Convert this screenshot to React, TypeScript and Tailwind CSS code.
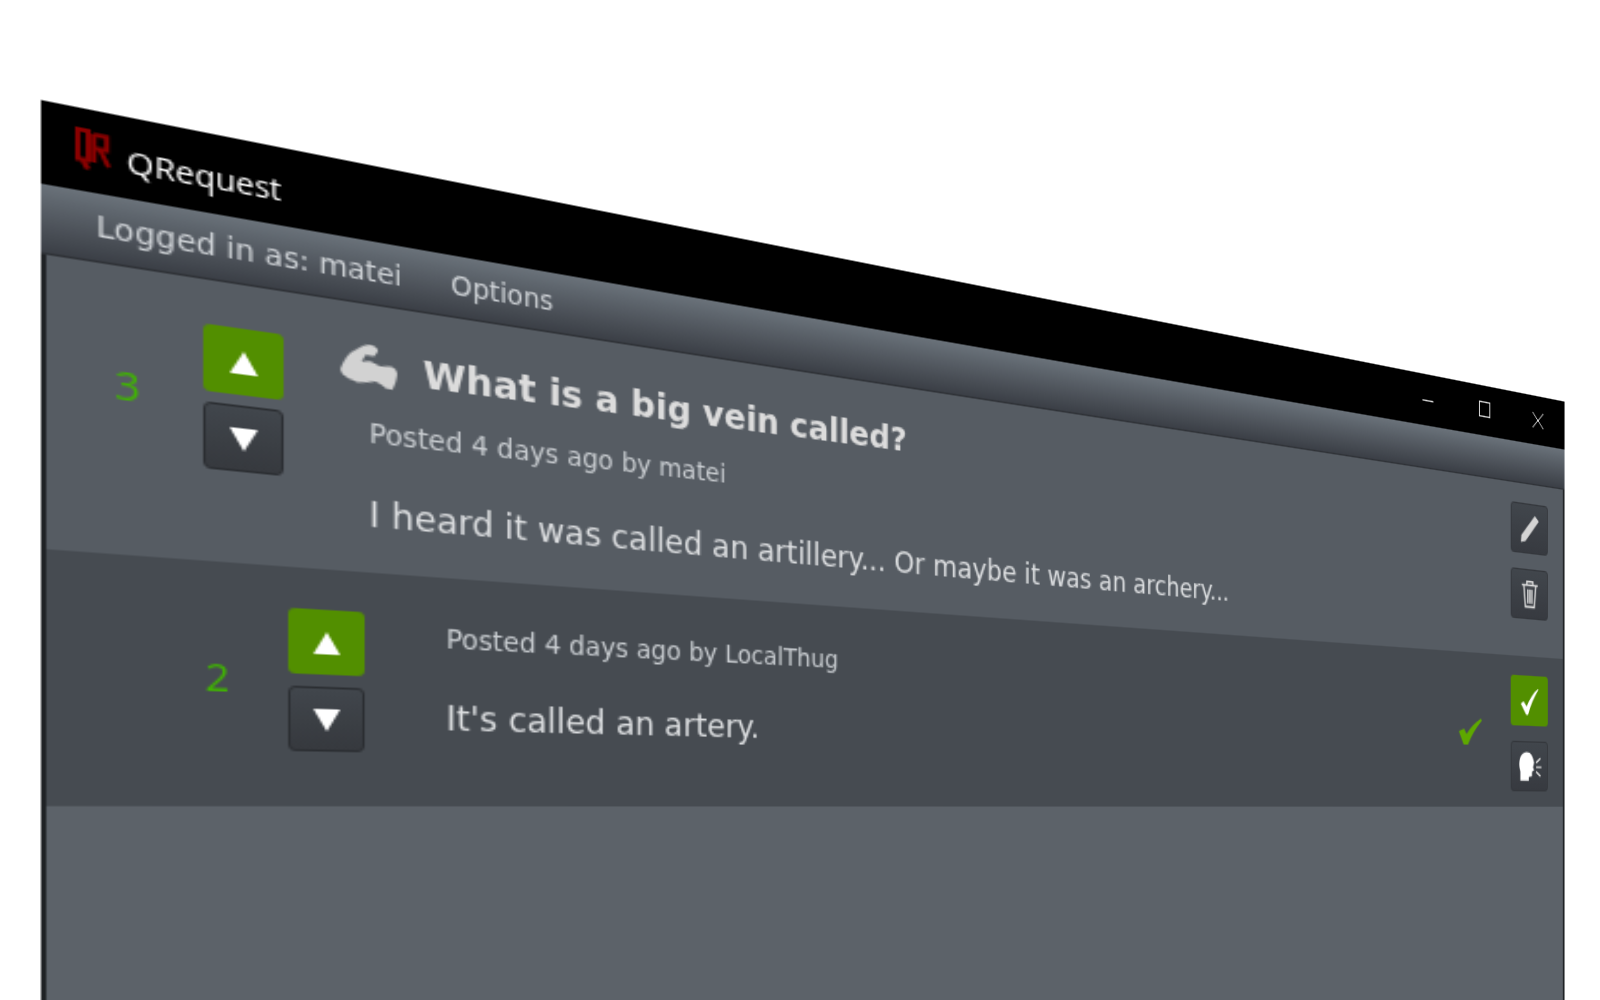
import React from "react";

function UpBtn() {
  return (
    <div className="flex h-[32px] w-[34px] items-center justify-center rounded-[3px] bg-[#528f00]">
      <svg width="12" height="11" viewBox="0 0 12 11"><polygon points="6,0 12,11 0,11" fill="#fff" /></svg>
    </div>
  );
}
function DownBtn() {
  return (
    <div className="flex h-[32px] w-[34px] items-center justify-center rounded-[3px] border-[1.5px] border-[#2b2e32] bg-gradient-to-b from-[#41464c] to-[#36393e]">
      <svg width="12" height="11" viewBox="0 0 12 11"><polygon points="0,0 12,0 6,11" fill="#fff" /></svg>
    </div>
  );
}
function ActionBtn({ children, green }: { children: React.ReactNode; green?: boolean }) {
  return (
    <div
      className={
        green
          ? "flex h-[39px] w-[41px] items-center justify-center rounded-[3px] bg-[#528f00]"
          : "flex h-[39px] w-[41px] items-center justify-center rounded-[3px] border-[1.5px] border-[#34373c] bg-gradient-to-b from-[#41464c] to-[#373a40]"
      }
    >
      {children}
    </div>
  );
}
function Biceps() {
  return (
    <svg width="26" height="21" viewBox="0 0 26 21" className="shrink-0">
      <path
        d="M0 13.9C2 9 4 5 6.9 3.6C9 1.5 11.5 0 13.8 0C15.5 0 17.1 1 17.1 2.7L15.3 5.5L11.5 5.3L9.6 9C11 8.8 12.5 8 13.8 8.3C15.5 8.8 17 10 18.4 10C20.5 9.4 23 9.2 24.5 9.9C25.6 10.5 26 12 26 13C25.6 16 24.8 19 23.7 21L20.7 20.7C19 19.5 17.6 18.3 16 18C13 18.6 10 19.6 7.6 19.4C5 18.8 2.5 17.8 0.8 16.3Z"
        fill="#d2d2d2"
      />
    </svg>
  );
}
function Logo() {
  return (
    <svg width="14" height="19" viewBox="0 0 14 19" className="shrink-0" fill="none" stroke="#8a0000">
      <path d="M1 1H5V14.5H1Z" strokeWidth="2" />
      <path d="M3 15L5 18.5" strokeWidth="2.4" />
      <path d="M7.2 2V15M7.2 2.2H12.2V8.4H7.2M9.5 8.4L13 16" strokeWidth="2" />
    </svg>
  );
}

export default function App() {
  return (
    <div className="relative h-screen w-screen overflow-hidden bg-white">
      <div
        className="flex h-[520px] w-[1000px] origin-top-left flex-col font-['DejaVu_Sans',sans-serif] blur-[0.3px] [transform:matrix3d(2.686,0.6,0,0.000743,0,2.2,0,0,0,0,1,0,41,100,0,1)]"
      >
        {/* Title bar */}
        <div className="flex h-[38px] shrink-0 items-start bg-black pl-[12.5px] text-white">
          <div className="mt-[9px]"><Logo /></div>
          <span className="ml-[6.5px] mt-[11px] font-['Open_Sans',sans-serif] text-[14px] leading-[20px]">QRequest</span>
          <div className="ml-auto flex items-start pr-[24px]">
            <div className="mt-[19px] h-px w-[11px] bg-[#e0e0e0]" />
            <div className="ml-[47px] mt-[12px] h-[12px] w-[12px] border border-[#e0e0e0]" />
            <svg className="ml-[46px] mt-[13px]" width="12" height="12" viewBox="0 0 12 12" fill="none" stroke="#e0e0e0" strokeWidth="1">
              <path d="M0 0L12 12M12 0L0 12" />
            </svg>
          </div>
        </div>

        {/* Menu */}
        <div className="flex h-[32px] shrink-0 items-center border-b border-[#2f3237] bg-gradient-to-b from-[#6a727a] to-[#3b3f46] pl-[21px] text-[13.2px] text-[#ced2d6]">
          <span>Logged in as: matei</span>
          <span className="ml-[23px]">Options</span>
        </div>

        <div className="flex min-h-0 flex-1 flex-col border-x-2 border-[#1f2225] bg-[#5c6269]">
          {/* Question */}
          <div className="flex h-[134px] shrink-0 items-start bg-[#565c63] pl-[21.5px] pr-[17px]">
            <div className="mt-[21px] flex items-center">
              <span className="w-[20px] text-center font-['Open_Sans',sans-serif] text-[18px] text-[#3fb400]">3</span>
              <div className="ml-[20px] flex flex-col gap-[5px]">
                <UpBtn />
                <DownBtn />
              </div>
            </div>
            <div className="ml-[25.5px] flex min-w-0 flex-1 flex-col pt-[18px]">
              <div className="flex h-[25px] items-center">
                <Biceps />
                <span className="ml-[12px] pt-px text-[18.7px] font-bold leading-[25px] text-[#dcdcdc]">What is a big vein called?</span>
              </div>
              <div className="mt-[12px] pl-[13px] text-[13.2px] leading-[20px] text-[#c8ccd0]">Posted 4 days ago by matei</div>
              <div className="mt-[19.5px] pl-[13px] text-[16.9px] leading-[20px] text-[#dcdee0]">I heard it was called an artillery... Or maybe it was an archery...</div>
            </div>
            <div className="mt-[15px] flex flex-col gap-[11.5px]">
              <ActionBtn>
                <svg width="22" height="23" viewBox="0 0 20 20"><path d="M15 0.5L19 4L5.5 19L1 20L1.5 15Z" fill="#d4d4d4" /></svg>
              </ActionBtn>
              <ActionBtn>
                <svg width="22" height="24" viewBox="0 0 20 22" fill="none" stroke="#dcdcdc" strokeWidth="1.4">
                  <path d="M2 5H18M7 5V2.5H13V5M4 5.5L5.5 20.5H14.5L16 5.5M8 8V18M12 8V18M10 8V18" />
                </svg>
              </ActionBtn>
            </div>
          </div>

          {/* Answer */}
          <div className="flex h-[116.5px] shrink-0 items-start bg-[#464b51] pl-[58px] pr-[17px]">
            <div className="mt-[20px] flex items-center">
              <span className="w-[20px] text-center font-['Open_Sans',sans-serif] text-[18px] text-[#3fb400]">2</span>
              <div className="ml-[20px] flex flex-col gap-[6px]">
                <UpBtn />
                <DownBtn />
              </div>
            </div>
            <div className="ml-[38px] flex min-w-0 flex-1 flex-col pt-[22px]">
              <div className="text-[13.3px] leading-[20px] text-[#c8ccd0]">Posted 4 days ago by LocalThug</div>
              <div className="mt-[20px] text-[16.9px] leading-[20px] text-[#dcdee0]">It's called an artery.</div>
            </div>
            <svg className="mr-[31px] mt-[50px]" width="25" height="20" viewBox="0 0 25 20">
              <path d="M1 10L6.5 8L9 12C13 7 18 3 24 0L25 1.5C19 7 14 13 10.5 20L6 20Z" fill="#5ea800" />
            </svg>
            <div className="mt-[15px] flex flex-col gap-[11.5px]">
              <ActionBtn green>
                <svg width="22" height="22" viewBox="0 0 22 22"><path d="M1 13L4 11L7.5 15C10.5 9 15 4 20 1L20.5 1.5C16 7 11.5 14 9 21.5L7 21.5Z" fill="#fff" /></svg>
              </ActionBtn>
              <ActionBtn>
                <svg width="28" height="24" viewBox="0 0 24 20">
                  <path d="M2 9C2 4 5 1 9 1C13 1 15 4 16 8L15 11L16 13L14 14L14 17L11 17.5V20H3V14C2.5 12.5 2 11 2 9Z" fill="#fff" />
                  <path d="M18 8L22 5M18 11H23M18 14L22 17" stroke="#dcdcdc" strokeWidth="1.2" fill="none" />
                </svg>
              </ActionBtn>
            </div>
          </div>
        </div>
      </div>
    </div>
  );
}
